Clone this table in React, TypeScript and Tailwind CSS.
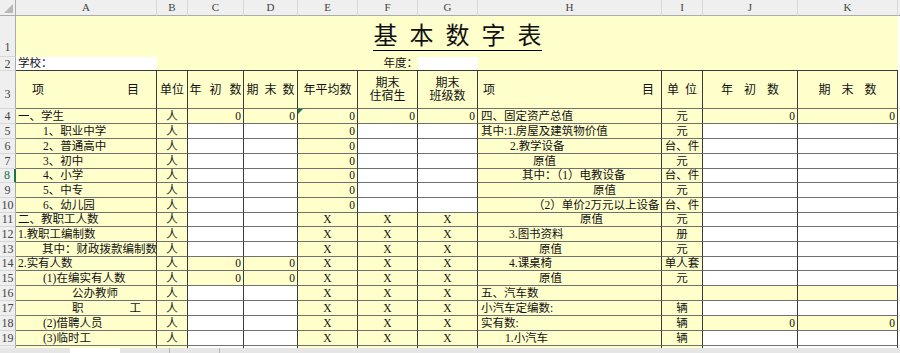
import React from 'react';

type V = string | null;
type R = {
  n: number;
  h: string;
  a: [string, string];
  c: V;
  d: V;
  e: string;
  f: V;
  g: V;
  hh: [string, string];
  i: string;
  j: V;
  k: V;
};

const GRID =
  'grid grid-cols-[16px_141px_31px_56px_54px_60px_60px_60px_184px_41px_95px_100px_1fr]';
const LINE = 'border-r border-b border-r-[#3a3a3a] border-b-[#707070]';

const rows: R[] = [
  { n: 4, h: 'h-[15px]', a: ['一、学生', 'pl-[2px]'], c: '0', d: '0', e: '0', f: '0', g: '0', hh: ['四、固定资产总值', 'pl-[3px]'], i: '元', j: '0', k: '0' },
  { n: 5, h: 'h-[15px]', a: ['1、职业中学', 'pl-[27px]'], c: null, d: null, e: '0', f: null, g: null, hh: ['其中:1.房屋及建筑物价值', 'pl-[3px]'], i: '元', j: null, k: null },
  { n: 6, h: 'h-[15px]', a: ['2、普通高中', 'pl-[27px]'], c: null, d: null, e: '0', f: null, g: null, hh: ['2.教学设备', 'pl-[32px]'], i: '台、件', j: null, k: null },
  { n: 7, h: 'h-[15px]', a: ['3、初中', 'pl-[27px]'], c: null, d: null, e: '0', f: null, g: null, hh: ['原值', 'pl-[55px]'], i: '元', j: null, k: null },
  { n: 8, h: 'h-[14px]', a: ['4、小学', 'pl-[27px]'], c: null, d: null, e: '0', f: null, g: null, hh: ['其中：（1）电教设备', 'pl-[44px]'], i: '台、件', j: null, k: null },
  { n: 9, h: 'h-[15px]', a: ['5、中专', 'pl-[27px]'], c: null, d: null, e: '0', f: null, g: null, hh: ['原值', 'pl-[115px]'], i: '元', j: null, k: null },
  { n: 10, h: 'h-[15px]', a: ['6、幼儿园', 'pl-[27px]'], c: null, d: null, e: '0', f: null, g: null, hh: ['（2）单价2万元以上设备', 'pl-[55px]'], i: '台、件', j: null, k: null },
  { n: 11, h: 'h-[14px]', a: ['二、教职工人数', 'pl-[2px]'], c: null, d: null, e: 'X', f: 'X', g: 'X', hh: ['原值', 'pl-[102px]'], i: '元', j: null, k: null },
  { n: 12, h: 'h-[15px]', a: ['1.教职工编制数', 'pl-[2px]'], c: null, d: null, e: 'X', f: 'X', g: 'X', hh: ['3.图书资料', 'pl-[31px]'], i: '册', j: null, k: null },
  { n: 13, h: 'h-[15px]', a: ['其中：财政拨款编制数', 'pl-[26px]'], c: null, d: null, e: 'X', f: 'X', g: 'X', hh: ['原值', 'pl-[61px]'], i: '元', j: null, k: null },
  { n: 14, h: 'h-[14px]', a: ['2.实有人数', 'pl-[2px]'], c: '0', d: '0', e: 'X', f: 'X', g: 'X', hh: ['4.课桌椅', 'pl-[31px]'], i: '单人套', j: null, k: null },
  { n: 15, h: 'h-[15px]', a: ['(1)在编实有人数', 'pl-[27px]'], c: '0', d: '0', e: 'X', f: 'X', g: 'X', hh: ['原值', 'pl-[61px]'], i: '元', j: null, k: null },
  { n: 16, h: 'h-[15px]', a: ['公办教师', 'pl-[56px]'], c: null, d: null, e: 'X', f: 'X', g: 'X', hh: ['五、汽车数', 'pl-[3px]'], i: '', j: '', k: '' },
  { n: 17, h: 'h-[15px]', a: ['职|工', 'pl-[56px]'], c: null, d: null, e: 'X', f: 'X', g: 'X', hh: ['小汽车定编数:', 'pl-[3px]'], i: '辆', j: null, k: null },
  { n: 18, h: 'h-[15px]', a: ['(2)借聘人员', 'pl-[27px]'], c: null, d: null, e: 'X', f: 'X', g: 'X', hh: ['实有数:', 'pl-[3px]'], i: '辆', j: '0', k: '0' },
  { n: 19, h: 'h-[15px]', a: ['(3)临时工', 'pl-[27px]'], c: null, d: null, e: 'X', f: 'X', g: 'X', hh: ['1.小汽车', 'pl-[27px]'], i: '辆', j: null, k: null },
];

function RowHead({ n, h, cls = 'items-end', sel = false }: { n: number | string; h: string; cls?: string; sel?: boolean }) {
  return (
    <div
      className={`${h} flex justify-center ${cls} bg-[#efefef] border-b border-b-[#d8d8d8] text-[12px] leading-none ${
        sel ? 'border-r-2 border-r-[#217346] text-[#217346]' : 'border-r border-r-[#ababab] text-[#444]'
      }`}
    >
      {n}
    </div>
  );
}

function Cell({ h, v, cls = '' }: { h: string; v: V; cls?: string }) {
  return (
    <div
      className={`${h} flex items-end pb-[1px] leading-none text-[11.5px] whitespace-nowrap overflow-hidden ${LINE} ${
        v === null ? 'bg-white' : 'bg-[#ffffcc]'
      } ${cls}`}
    >
      {v}
    </div>
  );
}

function Num({ h, v }: { h: string; v: V }) {
  const x = v === 'X';
  return <Cell h={h} v={v} cls={x ? 'justify-center' : 'justify-end pr-[2px]'} />;
}

function Spread({ chars, gap }: { chars: string[]; gap: string }) {
  return (
    <div className={`flex ${gap}`}>
      {chars.map((c, i) => (
        <span key={i}>{c}</span>
      ))}
    </div>
  );
}

export default function App() {
  const letters = ['A', 'B', 'C', 'D', 'E', 'F', 'G', 'H', 'I', 'J', 'K'];
  const base = `h-[38px] flex items-center text-[12px] bg-[#ffffcc] ${LINE}`;
  const head = `${base} justify-center leading-none`;
  const twoLine = `${base} flex-col justify-center leading-[13px]`;

  return (
    <div className="w-[900px] h-[353px] overflow-hidden bg-white text-[#111] font-['Liberation_Serif','Noto_Sans_CJK_SC',serif] flex flex-col">
      <div className={GRID}>
        {/* column letters */}
        <div className="h-[16px] bg-[#efefef] border-r border-b border-r-[#ababab] border-b-[#ababab]">
          <svg width="16" height="16" viewBox="0 0 16 16">
            <polygon points="13,4 13,13 4,13" fill="#b8b8b8" />
          </svg>
        </div>
        {letters.map((l) => (
          <div
            key={l}
            className="h-[16px] flex items-center justify-center bg-[#efefef] border-r border-b border-r-[#d8d8d8] border-b-[#ababab] text-[11px] text-[#444]"
          >
            {l}
          </div>
        ))}
        <div className="h-[16px] bg-[#efefef] border-b border-b-[#ababab]" />

        {/* row 1 title */}
        <RowHead n={1} h="h-[41px]" cls="items-end pb-[3px]" />
        <div className="col-span-11 h-[41px] bg-[#ffffcc] flex items-end justify-center pb-[6px]">
          <div className="flex gap-[12px] text-[24px] leading-none font-normal border-b-[1.5px] border-black pb-[2px] pl-[1px]">
            {['基', '本', '数', '字', '表'].map((c) => (
              <span key={c}>{c}</span>
            ))}
          </div>
        </div>
        <div className="h-[41px] bg-white" />

        {/* row 2 */}
        <RowHead n={2} h="h-[14px]" />
        <div className="h-[14px] bg-white border-b border-b-[#3a3a3a] flex items-end pl-[2px] pb-[1px] text-[11.5px] leading-none">
          学校：
        </div>
        <div className="col-span-4 h-[14px] bg-[#ffffcc] border-b border-b-[#3a3a3a]" />
        <div className="h-[14px] bg-[#ffffcc] border-b border-b-[#3a3a3a] flex items-end justify-end pb-[1px] text-[11.5px] leading-none">
          年度：
        </div>
        <div className="h-[14px] bg-white border-b border-b-[#3a3a3a]" />
        <div className="col-span-4 h-[14px] bg-[#ffffcc] border-b border-b-[#3a3a3a]" />
        <div className="h-[14px] bg-white" />

        {/* row 3 header */}
        <RowHead n={3} h="h-[38px]" cls="items-center pt-[8px]" />
        <div className={`${base} leading-none justify-between pl-[16px] pr-[17px]`}>
          <span>项</span>
          <span>目</span>
        </div>
        <div className={head}>单位</div>
        <div className={head}>
          <Spread chars={['年', '初', '数']} gap="gap-[8px]" />
        </div>
        <div className={head}>
          <Spread chars={['期', '末', '数']} gap="gap-[6px]" />
        </div>
        <div className={head}>年平均数</div>
        <div className={twoLine}>
          <span>期末</span>
          <span>住宿生</span>
        </div>
        <div className={twoLine}>
          <span>期末</span>
          <span>班级数</span>
        </div>
        <div className={`${base} leading-none justify-between pl-[5px] pr-[7px]`}>
          <span>项</span>
          <span>目</span>
        </div>
        <div className={head}>
          <Spread chars={['单', '位']} gap="gap-[6px]" />
        </div>
        <div className={head}>
          <Spread chars={['年', '初', '数']} gap="gap-[11px]" />
        </div>
        <div className={head}>
          <Spread chars={['期', '末', '数']} gap="gap-[11px]" />
        </div>
        <div className="h-[38px] bg-white border-b border-b-[#e2e2e2]" />

        {/* body rows */}
        {rows.map((r) => (
          <React.Fragment key={r.n}>
            <RowHead n={r.n} h={r.h} sel={r.n === 8} cls="items-end pb-[1px]" />
            {r.a[0].includes('|') ? (
              <div className={`${r.h} flex items-end pb-[1px] gap-[46px] leading-none text-[11.5px] bg-[#ffffcc] ${LINE} ${r.a[1]}`}>
                <span>职</span>
                <span>工</span>
              </div>
            ) : (
              <Cell h={r.h} v={r.a[0]} cls={r.a[1]} />
            )}
            <Cell h={r.h} v="人" cls="justify-center" />
            <Num h={r.h} v={r.c} />
            <Num h={r.h} v={r.d} />
            <div className="relative">
              <Num h={r.h} v={r.e} />
              {r.n === 4 && (
                <svg className="absolute left-0 top-0" width="5" height="5" viewBox="0 0 5 5">
                  <polygon points="0,0 5,0 0,5" fill="#1e7b45" />
                </svg>
              )}
            </div>
            <Num h={r.h} v={r.f} />
            <Num h={r.h} v={r.g} />
            <Cell h={r.h} v={r.hh[0]} cls={r.hh[1]} />
            <Cell h={r.h} v={r.i} cls="justify-center" />
            <Num h={r.h} v={r.j} />
            <Num h={r.h} v={r.k} />
            <div className={`${r.h} bg-white border-b border-b-[#e2e2e2]`} />
          </React.Fragment>
        ))}

        {/* row 20, cut by the sheet tabs */}
        <div className="h-[2px] bg-[#efefef] border-r border-r-[#ababab]" />
        <div className="h-[2px] bg-[#ffffcc] border-r border-r-[#3a3a3a]" />
        <div className="h-[2px] bg-[#ffffcc] border-r border-r-[#3a3a3a]" />
        <div className="h-[2px] bg-white border-r border-r-[#3a3a3a]" />
        <div className="h-[2px] bg-white border-r border-r-[#3a3a3a]" />
        <div className="h-[2px] bg-[#ffffcc] border-r border-r-[#3a3a3a]" />
        <div className="h-[2px] bg-[#ffffcc] border-r border-r-[#3a3a3a]" />
        <div className="h-[2px] bg-[#ffffcc] border-r border-r-[#3a3a3a]" />
        <div className="h-[2px] bg-[#ffffcc] border-r border-r-[#3a3a3a]" />
        <div className="h-[2px] bg-[#ffffcc] border-r border-r-[#3a3a3a]" />
        <div className="h-[2px] bg-white border-r border-r-[#3a3a3a]" />
        <div className="h-[2px] bg-white border-r border-r-[#3a3a3a]" />
        <div className="h-[2px] bg-white" />
      </div>

      {/* sheet tab strip */}
      <div className="flex h-[5px] bg-[#e6e6e6]">
        <div className="w-[70px]" />
        <div className="w-[50px] bg-white" />
        <div className="w-[50px] border-r border-r-[#b8b8b8]" />
        <div className="w-[50px] border-r border-r-[#b8b8b8]" />
      </div>
    </div>
  );
}
